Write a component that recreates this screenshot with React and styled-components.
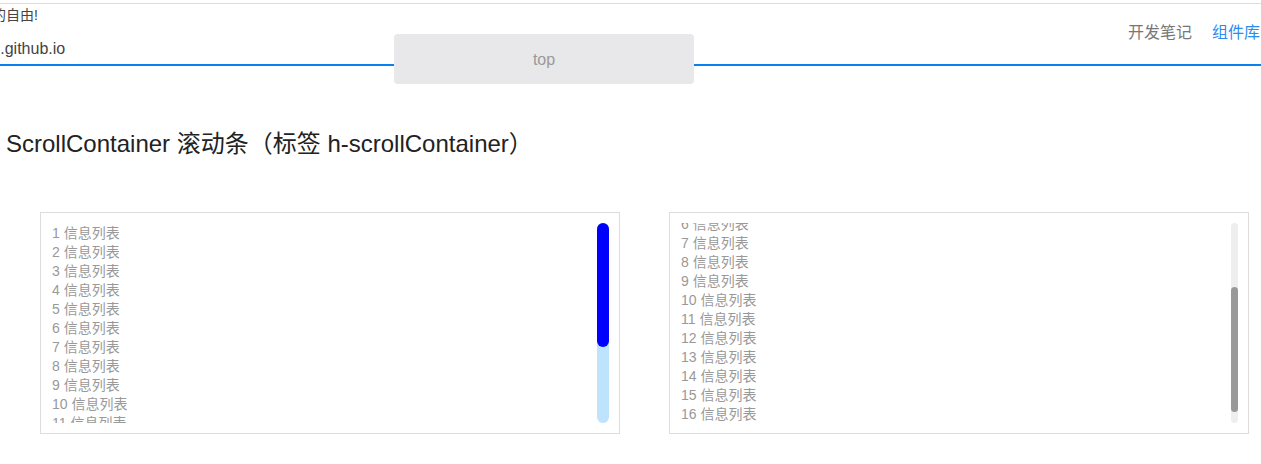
import React from "react";
import styled, { createGlobalStyle } from "styled-components";

const GlobalStyle = createGlobalStyle`
  html, body { margin: 0; padding: 0; background: #fff; }
  body {
    font-family: "Liberation Sans", Arial, "Noto Sans CJK SC", sans-serif;
    color: #333;
    overflow: hidden;
  }
`;

const Page = styled.div`
  position: relative;
  width: 1261px;
  padding-top: 3px;
`;

const Header = styled.header`
  display: flex;
  align-items: center;
  justify-content: space-between;
  height: 60px;
  border-top: 1px solid #ddd;
  border-bottom: 2px solid #0a80f0;
`;

const Brand = styled.div`
  width: 80px;
  overflow: hidden;
  align-self: stretch;
`;

const BrandInner = styled.div`
  margin-left: -22px;
  display: flex;
  flex-direction: column;
  color: #444;
`;

const BrandTitle = styled.div`
  white-space: nowrap;
  font-size: 14px;
  line-height: 22px;
  height: 33px;
`;

const BrandUrl = styled.div`
  white-space: nowrap;
  font-size: 16px;
  line-height: 24px;
`;

const Nav = styled.nav`
  display: flex;
  gap: 20px;
  padding-right: 1px;
  margin-top: -7px;
`;

const NavLink = styled.a`
  font-size: 16px;
  font-family: "Noto Sans CJK SC", sans-serif;
  color: ${(p) => (p.$active ? "#2d8cf0" : "#777")};
  text-decoration: none;
  line-height: 24px;
`;

const TopButton = styled.div`
  position: absolute;
  left: 394px;
  top: 34px;
  width: 300px;
  height: 50px;
  border-radius: 4px;
  background: #e8e8ea;
  color: #999;
  font-size: 16px;
  display: flex;
  align-items: center;
  justify-content: center;
  padding-top: 1px;
  box-sizing: border-box;
`;

const Title = styled.h2`
  margin: 62px 0 0 6px;
  font-size: 24px;
  font-weight: normal;
  line-height: 32px;
  color: #222;
`;

const Demos = styled.div`
  display: flex;
  gap: 49px;
  padding-left: 40px;
  margin-top: 52px;
`;

const Box = styled.div`
  width: 558px;
  padding: 10px;
  border: 1px solid #ddd;
`;

const Viewport = styled.div`
  position: relative;
  height: 200px;
  overflow: hidden;
`;

const List = styled.ul`
  list-style: none;
  margin: 0;
  padding: 1px 0 0 1px;
`;

const Item = styled.li`
  font-size: 14px;
  line-height: 19px;
  height: 19px;
  color: #999;
  white-space: nowrap;
`;

const Track = styled.div`
  position: absolute;
  top: 0;
  right: 0;
  width: ${(p) => p.$w}px;
  height: 200px;
  border-radius: ${(p) => p.$w / 2}px;
  background: ${(p) => p.$track};
`;

const Thumb = styled.div`
  position: absolute;
  left: 0;
  width: 100%;
  border-radius: ${(p) => p.$r}px;
  background: ${(p) => p.$color};
`;

const items = Array.from({ length: 16 }, (_, i) => i + 1);

function ScrollDemo({ offset, barWidth, track, thumb, thumbTop, thumbHeight }) {
  return (
    <Box>
      <Viewport>
        <List style={{ transform: `translateY(${-offset}px)` }}>
          {items.map((n) => (
            <Item key={n}>{n} 信息列表</Item>
          ))}
        </List>
        <Track $w={barWidth} $track={track}>
          <Thumb
            $color={thumb}
            $r={barWidth / 2}
            style={{ top: thumbTop, height: thumbHeight }}
          />
        </Track>
      </Viewport>
    </Box>
  );
}

export default function App() {
  return (
    <>
      <GlobalStyle />
      <Page>
        <Header>
          <Brand>
            <BrandInner>
              <BrandTitle>心的自由!</BrandTitle>
              <BrandUrl>tao.github.io</BrandUrl>
            </BrandInner>
          </Brand>
          <Nav>
            <NavLink>开发笔记</NavLink>
            <NavLink $active>组件库</NavLink>
          </Nav>
        </Header>
        <TopButton>top</TopButton>
        <Title>ScrollContainer 滚动条（标签 h-scrollContainer）</Title>
        <Demos>
          <ScrollDemo
            offset={0}
            barWidth={12}
            track="#bde3fd"
            thumb="#0000ff"
            thumbTop={0}
            thumbHeight={124}
          />
          <ScrollDemo
            offset={104}
            barWidth={7}
            track="#eeeeee"
            thumb="#999999"
            thumbTop={64}
            thumbHeight={125}
          />
        </Demos>
      </Page>
    </>
  );
}
